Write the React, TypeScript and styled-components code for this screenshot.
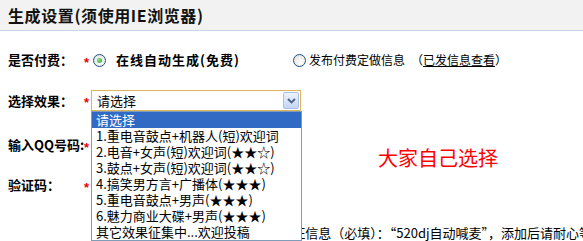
import React from 'react'
import styled, { createGlobalStyle } from 'styled-components'

const GlobalStyle = createGlobalStyle`
    body {
        margin: 0;
        background: #fff;
        font-family: 'Noto Sans CJK SC', 'Liberation Sans', sans-serif;
        color: #000;
    }
`

const Page = styled.div`
    position: relative;
    width: 583px;
    height: 241px;
    overflow: hidden;
`

const Header = styled.div`
    height: 30px;
    background: #f2f2f2;
    border-bottom: 1px solid #c3d5e6;
    display: flex;
    align-items: center;
    padding-left: 8px;
`

const HeaderTitle = styled.h3`
    margin: 0;
    font-size: 16px;
    font-weight: 700;
    line-height: 18px;
    letter-spacing: 0.6px;
    color: #111;
`

const Form = styled.div`
    display: flex;
    flex-direction: column;
    padding-left: 8px;
`

const Row = styled.div<{ $top: number; $h: number }>`
    display: grid;
    grid-template-columns: 76px 7px 1fr;
    align-items: center;
    margin-top: ${p => p.$top}px;
    height: ${p => p.$h}px;
`

const Label = styled.span`
    font-size: 13px;
    font-weight: 700;
    line-height: 16px;
    white-space: nowrap;
`

const Star = styled.span`
    color: #e00;
    font-family: 'Liberation Sans', sans-serif;
    font-size: 13px;
    font-weight: 700;
    line-height: 13px;
    padding-top: 4px;
`

const Content = styled.div`
    display: flex;
    align-items: center;
    position: relative;
`

const Option = styled.label<{ $w?: number }>`
    display: flex;
    align-items: center;
    width: ${p => (p.$w ? `${p.$w}px` : 'auto')};
    white-space: nowrap;
`

const Radio = styled.span<{ $on?: boolean }>`
    box-sizing: border-box;
    width: 13px;
    height: 13px;
    border-radius: 50%;
    border: 1px solid #1c5180;
    background: radial-gradient(circle at 60% 65%, #ffffff 0, #dcdcd6 100%);
    display: flex;
    align-items: center;
    justify-content: center;
    margin-left: 2px;
    &::after {
        content: '';
        width: 5px;
        height: 5px;
        border-radius: 50%;
        background: ${p => (p.$on ? 'radial-gradient(circle at 40% 40%, #8fe28a, #21a121)' : 'transparent')};
    }
`

const OptionText = styled.span<{ $bold?: boolean; $gap: number }>`
    margin-left: ${p => p.$gap}px;
    font-size: ${p => (p.$bold ? 13 : 12)}px;
    font-weight: ${p => (p.$bold ? 700 : 400)};
    letter-spacing: ${p => (p.$bold ? 1 : 0)}px;
    line-height: 16px;
`

const Paren = styled.span`
    margin-left: 6px;
`

const ViewLink = styled.a`
    color: #000;
    text-decoration: underline;
`

const SelectBox = styled.div`
    position: relative;
    box-sizing: border-box;
    width: 210px;
    height: 21px;
    border: 1px solid #e0b45c;
    display: flex;
    align-items: center;
    justify-content: space-between;
    padding: 0 0 0 5px;
    background: #fff;
`

const SelectValue = styled.span`
    font-size: 13px;
    line-height: 16px;
`

const ArrowButton = styled.span`
    box-sizing: border-box;
    width: 16px;
    height: 17px;
    margin-right: 1px;
    border: 1px solid #a9c1e6;
    border-radius: 2px;
    background: linear-gradient(#eef3fd, #c3d5f7);
    display: flex;
    align-items: center;
    justify-content: center;
`

const DropList = styled.ul`
    position: absolute;
    top: 20px;
    left: -1px;
    width: 211px;
    box-sizing: border-box;
    margin: 0;
    padding: 0;
    list-style: none;
    border: 1px solid #7f9db9;
    background: #fff;
    z-index: 2;
`

const DropItem = styled.li<{ $active?: boolean }>`
    height: 16px;
    line-height: 16px;
    font-size: 13px;
    padding-left: 4px;
    white-space: nowrap;
    overflow: hidden;
    background: ${p => (p.$active ? '#316ac5' : '#fff')};
    color: ${p => (p.$active ? '#fff' : '#000')};
`

const Note = styled.span`
    font-size: 13px;
    line-height: 16px;
    white-space: nowrap;
`

const Annotation = styled.div`
    position: absolute;
    left: 378px;
    top: 146px;
    font-size: 20px;
    line-height: 24px;
    color: #ff0000;
    white-space: nowrap;
`

const Chevron: React.FC = () => (
    <svg width="9" height="6" viewBox="0 0 9 6">
        <path d="M1 1 L4.5 4.5 L8 1" fill="none" stroke="#4d6185" strokeWidth="1.8" />
    </svg>
)

const effects = [
    '请选择',
    '1.重电音鼓点+机器人(短)欢迎词',
    '2.电音+女声(短)欢迎词(★★☆)',
    '3.鼓点+女声(短)欢迎词(★★☆)',
    '4.搞笑男方言+广播体(★★★)',
    '5.重电音鼓点+男声(★★★)',
    '6.魅力商业大碟+男声(★★★)',
    '其它效果征集中...欢迎投稿',
]

const App: React.FC = () => {
    return (
        <Page>
            <GlobalStyle />
            <Header>
                <HeaderTitle>生成设置(须使用IE浏览器)</HeaderTitle>
            </Header>
            <Form>
                <Row $top={19} $h={20}>
                    <Label>是否付费：</Label>
                    <Star>*</Star>
                    <Content>
                        <Option $w={200}>
                            <Radio $on />
                            <OptionText $bold $gap={10}>在线自动生成(免费)</OptionText>
                        </Option>
                        <Option>
                            <Radio />
                            <OptionText $gap={3}>
                                发布付费定做信息<Paren>（<ViewLink>已发信息查看</ViewLink>）</Paren>
                            </OptionText>
                        </Option>
                    </Content>
                </Row>
                <Row $top={20} $h={21}>
                    <Label>选择效果：</Label>
                    <Star>*</Star>
                    <Content>
                        <SelectBox>
                            <SelectValue>请选择</SelectValue>
                            <ArrowButton><Chevron /></ArrowButton>
                            <DropList>
                                {effects.map((e, i) => (
                                    <DropItem key={e} $active={i === 0}>{e}</DropItem>
                                ))}
                            </DropList>
                        </SelectBox>
                    </Content>
                </Row>
                <Row $top={24} $h={20}>
                    <Label>输入QQ号码:</Label>
                    <Star>*</Star>
                    <Content />
                </Row>
                <Row $top={20} $h={20}>
                    <Label>验证码：</Label>
                    <Star>*</Star>
                    <Content />
                </Row>
                <Row $top={30} $h={16}>
                    <span />
                    <span />
                    <Content>
                        <Note>请先加客服QQ号码为好友，好友验证信息（必填）：“520dj自动喊麦”，添加后请耐心等待审核</Note>
                    </Content>
                </Row>
            </Form>
            <Annotation>大家自己选择</Annotation>
        </Page>
    )
}

export default App
